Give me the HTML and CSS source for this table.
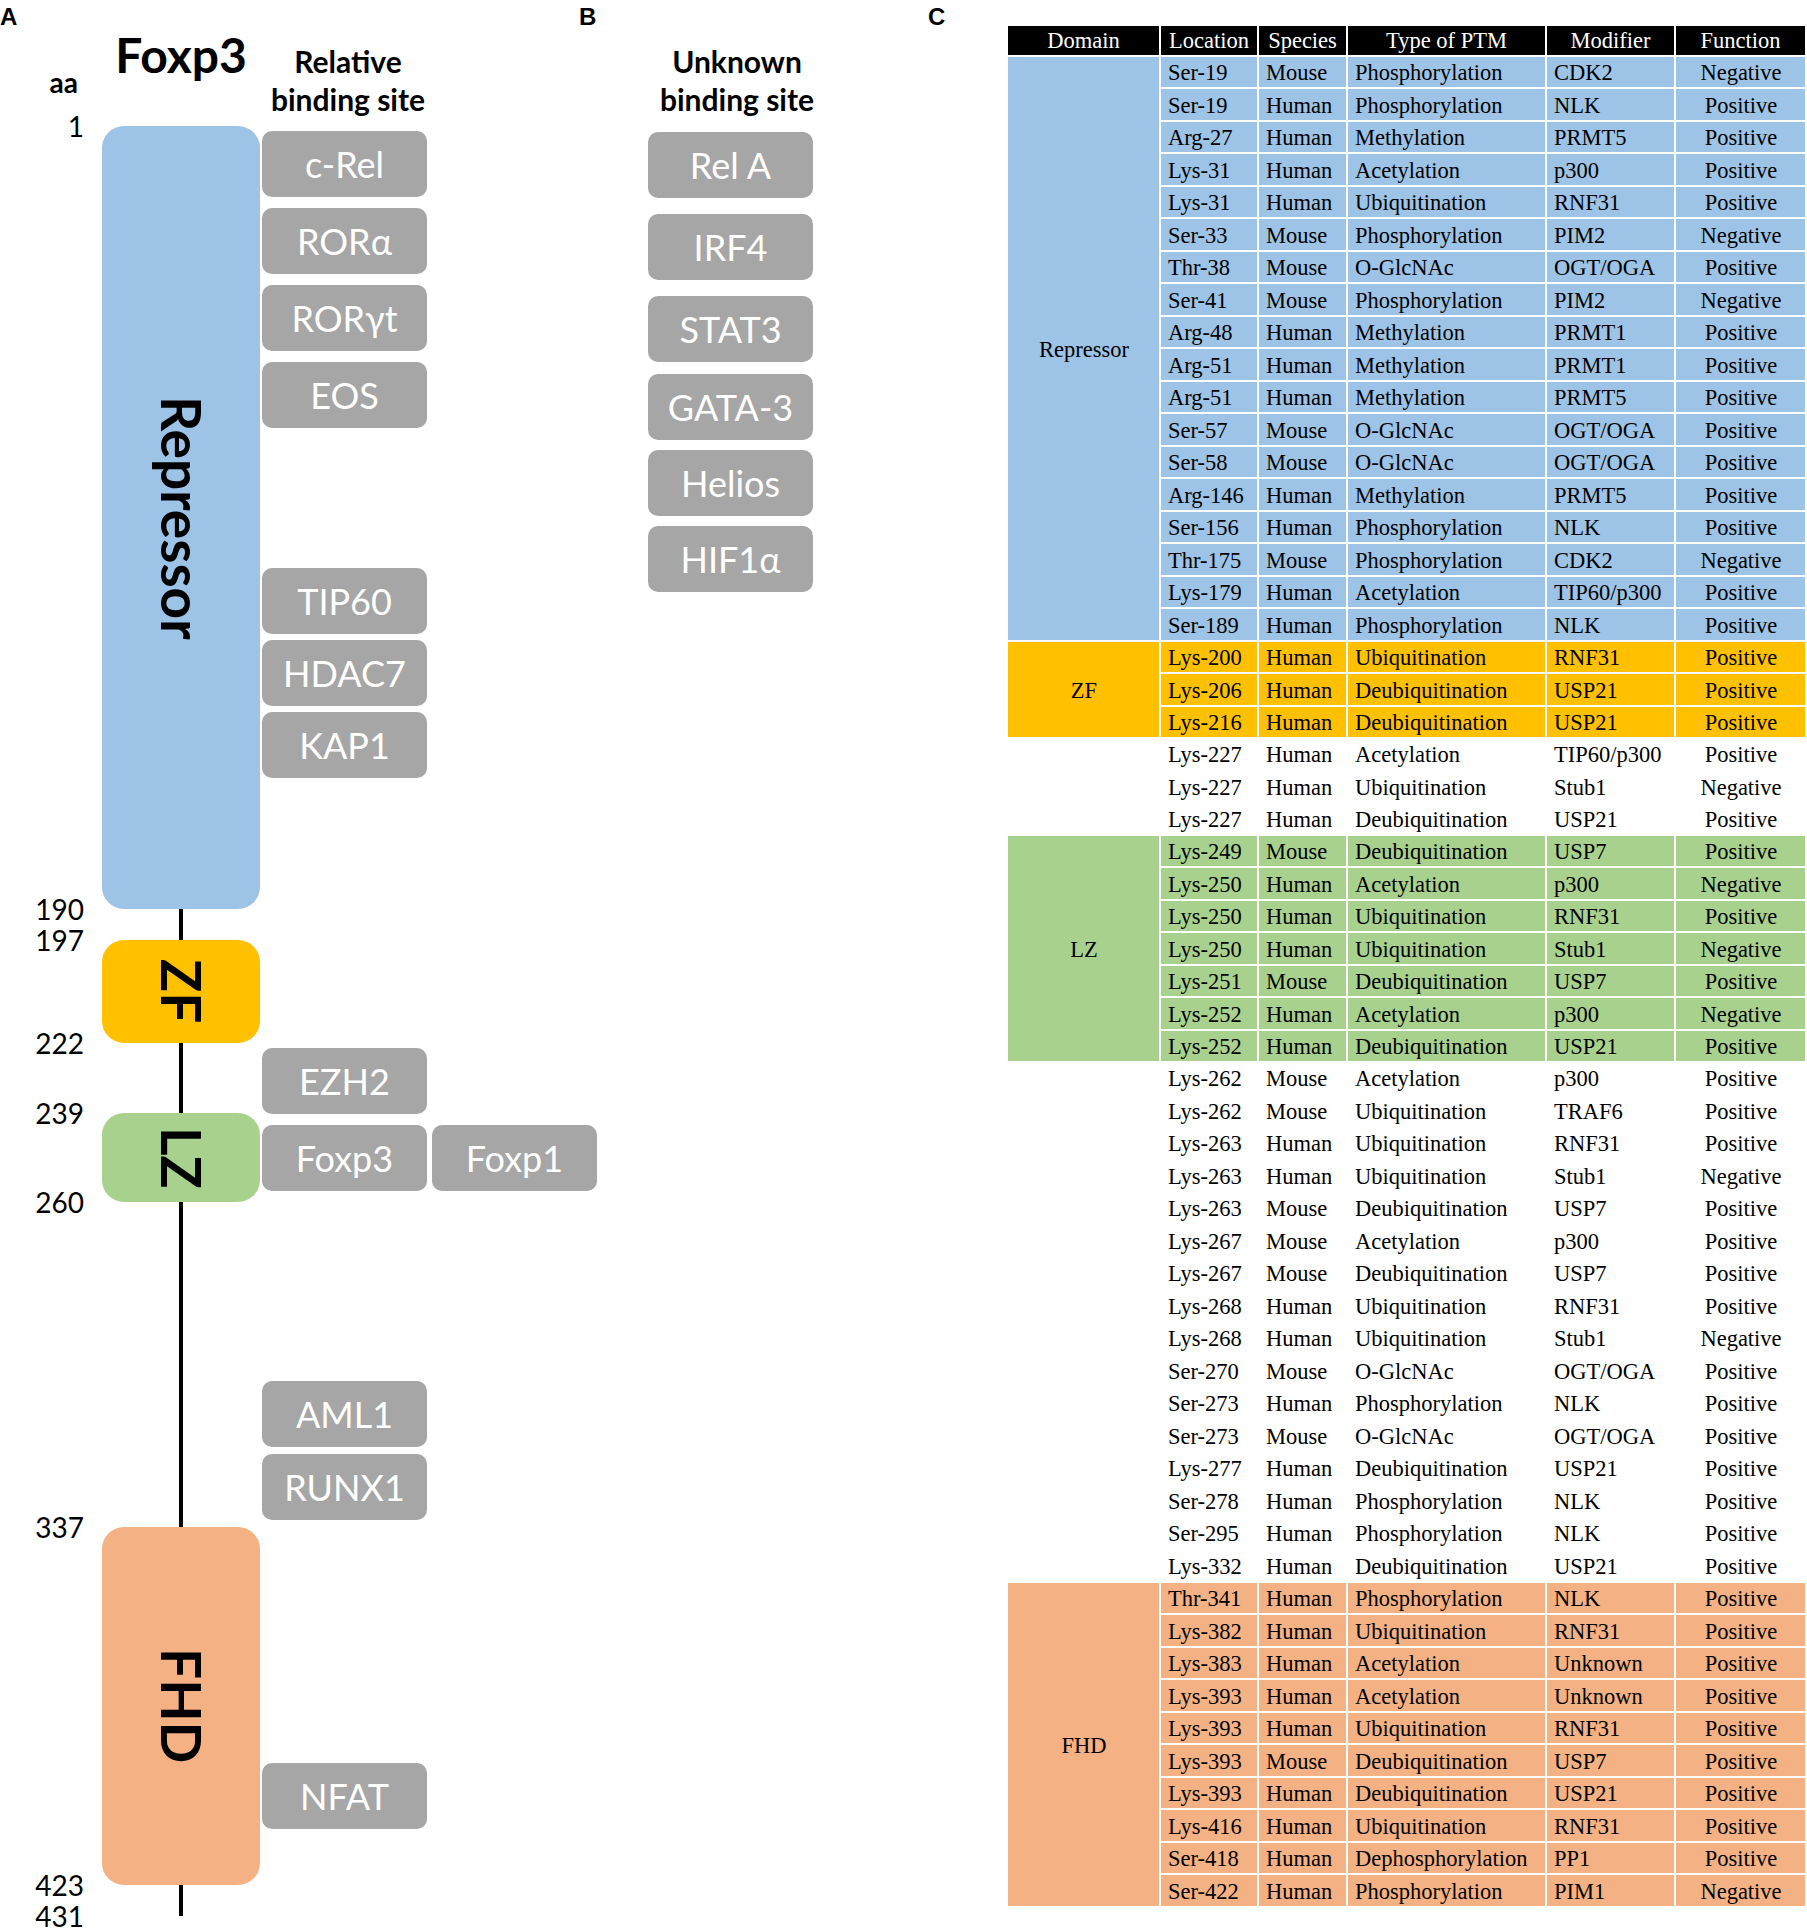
FILE: index.html
```html
<!DOCTYPE html>
<html lang="en">
<head>
    <meta charset="UTF-8">
    <meta name="viewport" content="width=device-width, initial-scale=1.0">
    <title>Foxp3 domains and post-translational modifications</title>
    <link rel="stylesheet" href="styles.css">
</head>
<body>
<div class="figure">

    <!-- A: domain map with relative binding sites -->
    <section class="panel panel-a">
        <div class="head-a">
            <div class="aa-col">
                <div class="panel-letter">A</div>
                <div class="aa">aa</div>
            </div>
            <h1 class="protein-name">Foxp3</h1>
            <h2 class="col-title">Relative<br>binding site</h2>
        </div>

        <div class="map">
            <div class="track">
                <div class="domain repressor">
                    <span class="pos start">1</span>
                    <span class="domain-name">Repressor</span>
                    <span class="pos end">190</span>
                </div>
                <div class="domain zf">
                    <span class="pos start">197</span>
                    <span class="domain-name">ZF</span>
                    <span class="pos end">222</span>
                </div>
                <div class="domain lz">
                    <span class="pos start">239</span>
                    <span class="domain-name">LZ</span>
                    <span class="pos end">260</span>
                </div>
                <div class="domain fhd">
                    <span class="pos start">337</span>
                    <span class="domain-name">FHD</span>
                    <span class="pos end">423</span>
                </div>
                <span class="pos tail">431</span>
            </div>

            <div class="binders">
                <div class="cluster cluster-1">
                    <div class="binder">c-Rel</div>
                    <div class="binder">RORα</div>
                    <div class="binder">RORγt</div>
                    <div class="binder">EOS</div>
                </div>
                <div class="cluster cluster-2">
                    <div class="binder">TIP60</div>
                    <div class="binder">HDAC7</div>
                    <div class="binder">KAP1</div>
                </div>
                <div class="cluster cluster-3">
                    <div class="binder">EZH2</div>
                    <div class="pair">
                        <div class="binder">Foxp3</div>
                        <div class="binder">Foxp1</div>
                    </div>
                </div>
                <div class="cluster cluster-4">
                    <div class="binder">AML1</div>
                    <div class="binder">RUNX1</div>
                </div>
                <div class="cluster cluster-5">
                    <div class="binder">NFAT</div>
                </div>
            </div>
        </div>
    </section>

    <!-- B: partners with unknown binding site -->
    <section class="panel panel-b">
        <div class="panel-letter">B</div>
        <div class="unknown">
            <h2 class="col-title">Unknown<br>binding site</h2>
            <div class="unknown-list">
                <div class="binder">Rel A</div>
                <div class="binder">IRF4</div>
                <div class="binder">STAT3</div>
                <div class="binder">GATA-3</div>
                <div class="binder">Helios</div>
                <div class="binder">HIF1α</div>
            </div>
        </div>
    </section>

    <!-- C: PTM table -->
    <section class="panel panel-c">
        <div class="panel-letter">C</div>
        <table class="ptm">
            <colgroup>
                <col class="c-domain">
                <col class="c-loc">
                <col class="c-species">
                <col class="c-type">
                <col class="c-mod">
                <col class="c-fn">
            </colgroup>
            <thead>
                <tr><th>Domain</th><th>Location</th><th>Species</th><th>Type of PTM</th><th>Modifier</th><th>Function</th></tr>
            </thead>
            <tbody class="rep">
                <tr><td class="dom" rowspan="18">Repressor</td><td>Ser-19</td><td>Mouse</td><td>Phosphorylation</td><td>CDK2</td><td class="fn">Negative</td></tr>
                <tr><td>Ser-19</td><td>Human</td><td>Phosphorylation</td><td>NLK</td><td class="fn">Positive</td></tr>
                <tr><td>Arg-27</td><td>Human</td><td>Methylation</td><td>PRMT5</td><td class="fn">Positive</td></tr>
                <tr><td>Lys-31</td><td>Human</td><td>Acetylation</td><td>p300</td><td class="fn">Positive</td></tr>
                <tr><td>Lys-31</td><td>Human</td><td>Ubiquitination</td><td>RNF31</td><td class="fn">Positive</td></tr>
                <tr><td>Ser-33</td><td>Mouse</td><td>Phosphorylation</td><td>PIM2</td><td class="fn">Negative</td></tr>
                <tr><td>Thr-38</td><td>Mouse</td><td>O-GlcNAc</td><td>OGT/OGA</td><td class="fn">Positive</td></tr>
                <tr><td>Ser-41</td><td>Mouse</td><td>Phosphorylation</td><td>PIM2</td><td class="fn">Negative</td></tr>
                <tr><td>Arg-48</td><td>Human</td><td>Methylation</td><td>PRMT1</td><td class="fn">Positive</td></tr>
                <tr><td>Arg-51</td><td>Human</td><td>Methylation</td><td>PRMT1</td><td class="fn">Positive</td></tr>
                <tr><td>Arg-51</td><td>Human</td><td>Methylation</td><td>PRMT5</td><td class="fn">Positive</td></tr>
                <tr><td>Ser-57</td><td>Mouse</td><td>O-GlcNAc</td><td>OGT/OGA</td><td class="fn">Positive</td></tr>
                <tr><td>Ser-58</td><td>Mouse</td><td>O-GlcNAc</td><td>OGT/OGA</td><td class="fn">Positive</td></tr>
                <tr><td>Arg-146</td><td>Human</td><td>Methylation</td><td>PRMT5</td><td class="fn">Positive</td></tr>
                <tr><td>Ser-156</td><td>Human</td><td>Phosphorylation</td><td>NLK</td><td class="fn">Positive</td></tr>
                <tr><td>Thr-175</td><td>Mouse</td><td>Phosphorylation</td><td>CDK2</td><td class="fn">Negative</td></tr>
                <tr><td>Lys-179</td><td>Human</td><td>Acetylation</td><td>TIP60/p300</td><td class="fn">Positive</td></tr>
                <tr><td>Ser-189</td><td>Human</td><td>Phosphorylation</td><td>NLK</td><td class="fn">Positive</td></tr>
            </tbody>
            <tbody class="zfg">
                <tr><td class="dom" rowspan="3">ZF</td><td>Lys-200</td><td>Human</td><td>Ubiquitination</td><td>RNF31</td><td class="fn">Positive</td></tr>
                <tr><td>Lys-206</td><td>Human</td><td>Deubiquitination</td><td>USP21</td><td class="fn">Positive</td></tr>
                <tr><td>Lys-216</td><td>Human</td><td>Deubiquitination</td><td>USP21</td><td class="fn">Positive</td></tr>
            </tbody>
            <tbody class="none">
                <tr><td class="dom" rowspan="3"></td><td>Lys-227</td><td>Human</td><td>Acetylation</td><td>TIP60/p300</td><td class="fn">Positive</td></tr>
                <tr><td>Lys-227</td><td>Human</td><td>Ubiquitination</td><td>Stub1</td><td class="fn">Negative</td></tr>
                <tr><td>Lys-227</td><td>Human</td><td>Deubiquitination</td><td>USP21</td><td class="fn">Positive</td></tr>
            </tbody>
            <tbody class="lzg">
                <tr><td class="dom" rowspan="7">LZ</td><td>Lys-249</td><td>Mouse</td><td>Deubiquitination</td><td>USP7</td><td class="fn">Positive</td></tr>
                <tr><td>Lys-250</td><td>Human</td><td>Acetylation</td><td>p300</td><td class="fn">Negative</td></tr>
                <tr><td>Lys-250</td><td>Human</td><td>Ubiquitination</td><td>RNF31</td><td class="fn">Positive</td></tr>
                <tr><td>Lys-250</td><td>Human</td><td>Ubiquitination</td><td>Stub1</td><td class="fn">Negative</td></tr>
                <tr><td>Lys-251</td><td>Mouse</td><td>Deubiquitination</td><td>USP7</td><td class="fn">Positive</td></tr>
                <tr><td>Lys-252</td><td>Human</td><td>Acetylation</td><td>p300</td><td class="fn">Negative</td></tr>
                <tr><td>Lys-252</td><td>Human</td><td>Deubiquitination</td><td>USP21</td><td class="fn">Positive</td></tr>
            </tbody>
            <tbody class="none">
                <tr><td class="dom" rowspan="16"></td><td>Lys-262</td><td>Mouse</td><td>Acetylation</td><td>p300</td><td class="fn">Positive</td></tr>
                <tr><td>Lys-262</td><td>Mouse</td><td>Ubiquitination</td><td>TRAF6</td><td class="fn">Positive</td></tr>
                <tr><td>Lys-263</td><td>Human</td><td>Ubiquitination</td><td>RNF31</td><td class="fn">Positive</td></tr>
                <tr><td>Lys-263</td><td>Human</td><td>Ubiquitination</td><td>Stub1</td><td class="fn">Negative</td></tr>
                <tr><td>Lys-263</td><td>Mouse</td><td>Deubiquitination</td><td>USP7</td><td class="fn">Positive</td></tr>
                <tr><td>Lys-267</td><td>Mouse</td><td>Acetylation</td><td>p300</td><td class="fn">Positive</td></tr>
                <tr><td>Lys-267</td><td>Mouse</td><td>Deubiquitination</td><td>USP7</td><td class="fn">Positive</td></tr>
                <tr><td>Lys-268</td><td>Human</td><td>Ubiquitination</td><td>RNF31</td><td class="fn">Positive</td></tr>
                <tr><td>Lys-268</td><td>Human</td><td>Ubiquitination</td><td>Stub1</td><td class="fn">Negative</td></tr>
                <tr><td>Ser-270</td><td>Mouse</td><td>O-GlcNAc</td><td>OGT/OGA</td><td class="fn">Positive</td></tr>
                <tr><td>Ser-273</td><td>Human</td><td>Phosphorylation</td><td>NLK</td><td class="fn">Positive</td></tr>
                <tr><td>Ser-273</td><td>Mouse</td><td>O-GlcNAc</td><td>OGT/OGA</td><td class="fn">Positive</td></tr>
                <tr><td>Lys-277</td><td>Human</td><td>Deubiquitination</td><td>USP21</td><td class="fn">Positive</td></tr>
                <tr><td>Ser-278</td><td>Human</td><td>Phosphorylation</td><td>NLK</td><td class="fn">Positive</td></tr>
                <tr><td>Ser-295</td><td>Human</td><td>Phosphorylation</td><td>NLK</td><td class="fn">Positive</td></tr>
                <tr><td>Lys-332</td><td>Human</td><td>Deubiquitination</td><td>USP21</td><td class="fn">Positive</td></tr>
            </tbody>
            <tbody class="fhdg">
                <tr><td class="dom" rowspan="10">FHD</td><td>Thr-341</td><td>Human</td><td>Phosphorylation</td><td>NLK</td><td class="fn">Positive</td></tr>
                <tr><td>Lys-382</td><td>Human</td><td>Ubiquitination</td><td>RNF31</td><td class="fn">Positive</td></tr>
                <tr><td>Lys-383</td><td>Human</td><td>Acetylation</td><td>Unknown</td><td class="fn">Positive</td></tr>
                <tr><td>Lys-393</td><td>Human</td><td>Acetylation</td><td>Unknown</td><td class="fn">Positive</td></tr>
                <tr><td>Lys-393</td><td>Human</td><td>Ubiquitination</td><td>RNF31</td><td class="fn">Positive</td></tr>
                <tr><td>Lys-393</td><td>Mouse</td><td>Deubiquitination</td><td>USP7</td><td class="fn">Positive</td></tr>
                <tr><td>Lys-393</td><td>Human</td><td>Deubiquitination</td><td>USP21</td><td class="fn">Positive</td></tr>
                <tr><td>Lys-416</td><td>Human</td><td>Ubiquitination</td><td>RNF31</td><td class="fn">Positive</td></tr>
                <tr><td>Ser-418</td><td>Human</td><td>Dephosphorylation</td><td>PP1</td><td class="fn">Positive</td></tr>
                <tr><td>Ser-422</td><td>Human</td><td>Phosphorylation</td><td>PIM1</td><td class="fn">Negative</td></tr>
            </tbody>
        </table>
    </section>

</div>
</body>
</html>
```

FILE: styles.css
```css
* {
    margin: 0;
    padding: 0;
    box-sizing: border-box;
}

body {
    background: #fff;
    color: #000;
    font-family: Lato, "Open Sans", sans-serif;
}

.figure {
    display: flex;
    width: 1807px;
    height: 1931px;
    overflow: hidden;
}

.panel-letter {
    height: 24px;
    margin-top: 5px;
    font: bold 24px/24px "Liberation Sans", Arial, sans-serif;
}

/* Panel A */
.panel-a {
    width: 579px;
    flex-shrink: 0;
}

.head-a {
    display: grid;
    grid-template-columns: 102px 158px 176px;
    height: 126px;
}

.aa {
    margin-top: 39px;
    padding-right: 24px;
    text-align: right;
    font-size: 28px;
    line-height: 28px;
    font-weight: 700;
}

.protein-name {
    margin-top: 31px;
    text-align: center;
    font-size: 48px;
    line-height: 48px;
    font-weight: 700;
}

.col-title {
    margin-top: 42px;
    text-align: center;
    font-size: 30px;
    line-height: 38px;
    font-weight: 700;
    white-space: nowrap;
}

.map {
    display: flex;
    align-items: flex-start;
}

.track {
    position: relative;
    display: flex;
    flex-direction: column;
    flex-shrink: 0;
    width: 158px;
    margin-left: 102px;
    padding-bottom: 31px;
    background: linear-gradient(#000, #000) center / 4px 100% no-repeat;
}

.domain {
    position: relative;
    display: flex;
    align-items: center;
    justify-content: center;
    border-radius: 22px;
}

.domain-name {
    writing-mode: vertical-rl;
    font-size: 55px;
    line-height: 1;
    font-weight: 700;
}

.repressor {
    height: 783px;
    background: #9dc3e6;
}

.zf {
    height: 103px;
    margin-top: 31px;
    background: #ffc000;
}

.lz {
    height: 89px;
    margin-top: 70px;
    background: #a9d18e;
}

.fhd {
    height: 358px;
    margin-top: 325px;
    background: #f4b183;
}

/* residue numbers on the left of the track */
.pos {
    position: absolute;
    right: calc(100% + 18px);
    transform: translateY(-50%);
    font-size: 28px;
    line-height: 22px;
    font-weight: 400;
    writing-mode: horizontal-tb;
}

.pos.start {
    top: 0;
}

.pos.end,
.pos.tail {
    top: 100%;
}

.binders {
    display: flex;
    flex-direction: column;
    flex-shrink: 0;
    margin-left: 2px;
}

.cluster {
    display: flex;
    flex-direction: column;
    gap: 11px;
}

.cluster-1 { margin-top: 5px; }
.cluster-2 { margin-top: 140px; gap: 6px; }
.cluster-3 { margin-top: 270px; }
.cluster-4 { margin-top: 190px; gap: 7px; }
.cluster-5 { margin-top: 243px; }

.pair {
    display: flex;
    gap: 5px;
}

.binder {
    display: flex;
    align-items: center;
    justify-content: center;
    flex-shrink: 0;
    width: 165px;
    height: 66px;
    border-radius: 10px;
    background: #a6a6a6;
    color: #fff;
    font-size: 36px;
    line-height: 1;
}

/* Panel B */
.panel-b {
    display: flex;
    width: 349px;
    flex-shrink: 0;
}

.panel-b .panel-letter {
    width: 69px;
    flex-shrink: 0;
}

.unknown {
    width: 178px;
}

.unknown-list {
    display: flex;
    flex-direction: column;
    margin-top: 14px;
}

.unknown-list .binder:nth-child(2),
.unknown-list .binder:nth-child(3) {
    margin-top: 16px;
}

.unknown-list .binder:nth-child(4) {
    margin-top: 12px;
}

.unknown-list .binder:nth-child(5),
.unknown-list .binder:nth-child(6) {
    margin-top: 10px;
}

/* Panel C */
.panel-c {
    display: flex;
    align-items: flex-start;
    width: 879px;
    flex-shrink: 0;
}

.panel-c .panel-letter {
    width: 78px;
    flex-shrink: 0;
}

.ptm {
    width: 801px;
    margin-top: 24px;
    table-layout: fixed;
    border-collapse: separate;
    border-spacing: 2px;
    font-family: "Liberation Serif", "Times New Roman", serif;
    font-size: 22.5px;
    line-height: 1;
}

.c-domain { width: 151px; }
.c-loc { width: 96px; }
.c-species { width: 87px; }
.c-type { width: 197px; }
.c-mod { width: 127px; }
.c-fn { width: 129px; }

.ptm thead tr {
    height: 29px;
}

.ptm th {
    padding: 1px 0 0;
    background: #000;
    color: #fff;
    font-weight: 400;
    text-align: center;
}

/* rows alternate 30/31px so the average pitch is 32.5px */
.ptm tbody tr {
    height: 30px;
}

.ptm tbody tr:nth-child(even) {
    height: 31px;
}

.ptm td {
    padding: 3px 6px 0 7px;
    white-space: nowrap;
}

.ptm td.fn,
.ptm td.dom {
    text-align: center;
}

.rep td { background: #9dc3e6; }
.zfg td { background: #ffc000; }
.lzg td { background: #a9d18e; }
.fhdg td { background: #f4b183; }
.none td { background: #fff; }
```
